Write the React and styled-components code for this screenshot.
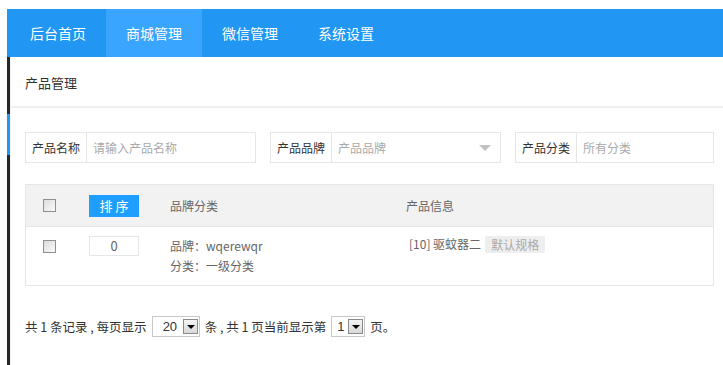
import styled, { createGlobalStyle } from 'styled-components'

const GlobalStyle = createGlobalStyle`
  html, body { margin: 0; padding: 0; background: #fff; }
  body {
    font-family: "Noto Sans CJK SC", "Liberation Sans", sans-serif;
    font-size: 13px;
    color: #333;
    overflow: hidden;
  }
`;

const tabs = ['后台首页', '商城管理', '微信管理', '系统设置'];

export default function App() {
  return (
    <Page>
      <GlobalStyle />
      <Nav>
        {tabs.map((t, i) => (
          <Tab key={t} $active={i === 1} $first={i === 0}>{t}</Tab>
        ))}
      </Nav>
      <Body>
        <SideBar>
          <SideDark $h={57} />
          <SideBlue />
          <SideDark $h={210} />
        </SideBar>
        <Content>
          <Title>产品管理</Title>
          <Main>
            <SearchRow>
              <Field $w={231}>
                <Label>产品名称</Label>
                <Input placeholder="请输入产品名称" />
              </Field>
              <Field $w={231}>
                <Label>产品品牌</Label>
                <SelectBox>
                  <span>产品品牌</span>
                  <Caret />
                </SelectBox>
              </Field>
              <Field $grow>
                <Label>产品分类</Label>
                <SelectBox>
                  <span>所有分类</span>
                </SelectBox>
              </Field>
            </SearchRow>

            <Table>
              <HeadRow>
                <CheckCell><Check /></CheckCell>
                <SortCell><SortBtn>排 序</SortBtn></SortCell>
                <BrandCell>品牌分类</BrandCell>
                <InfoCell>产品信息</InfoCell>
              </HeadRow>
              <DataRow>
                <CheckCell><Check /></CheckCell>
                <SortCell><SortInput>0</SortInput></SortCell>
                <BrandCell>
                  <Line>品牌：wqerewqr</Line>
                  <Line>分类：一级分类</Line>
                </BrandCell>
                <InfoCell $data>
                  <Line>[10] 驱蚊器二 <Tag>默认规格</Tag></Line>
                </InfoCell>
              </DataRow>
            </Table>

            <Pager>
              共 1 条记录 , 每页显示
              <PageSelect $w={48}><span>20</span><SelBtn /></PageSelect>
              条 , 共 1 页当前显示第
              <PageSelect $w={34}><span>1</span><SelBtn /></PageSelect>
              页。
            </Pager>
          </Main>
        </Content>
      </Body>
    </Page>
  );
}

const Page = styled.div`
  padding: 9px 0 0 7px;
  height: 356px;
`;

const Nav = styled.div`
  display: flex;
  height: 48px;
  background: #2196f3;
`;

const Tab = styled.div`
  display: flex;
  align-items: center;
  padding: 0 20px 0 ${p => (p.$first ? '23px' : '20px')};
  color: #fff;
  font-size: 14px;
  background: ${p => (p.$active ? '#39a5ff' : 'transparent')};
`;

const Body = styled.div`
  display: flex;
  height: 308px;
`;

const SideBar = styled.div`
  width: 3px;
  display: flex;
  flex-direction: column;
  flex-shrink: 0;
`;

const SideDark = styled.div`
  height: ${p => p.$h}px;
  background: #24272b;
`;

const SideBlue = styled.div`
  height: 41px;
  background: #2196f3;
`;

const Content = styled.div`
  flex: 1;
  border-left: 1px solid #f2f2f2;
  min-width: 0;
`;

const Title = styled.div`
  height: 49px;
  line-height: 51px;
  padding-left: 14px;
  font-size: 13px;
  color: #333;
  border-bottom: 2px solid #f0f0f0;
`;

const Main = styled.div`
  padding: 24px 9px 0 14px;
`;

const SearchRow = styled.div`
  display: flex;
  gap: 14px;
`;

const Field = styled.div`
  display: flex;
  height: 29px;
  border: 1px solid #e6e6e6;
  width: ${p => (p.$grow ? 'auto' : `${p.$w - 2}px`)};
  flex: ${p => (p.$grow ? 1 : 'none')};
`;

const Label = styled.div`
  width: 60px;
  flex-shrink: 0;
  display: flex;
  align-items: center;
  justify-content: center;
  border-right: 1px solid #e6e6e6;
  color: #333;
  font-size: 12px;
`;

const Input = styled.input`
  flex: 1;
  min-width: 0;
  border: none;
  outline: none;
  padding: 0 6px;
  font: inherit;
  font-size: 12px;
  &::placeholder { color: #aaa; }
`;

const SelectBox = styled.div`
  flex: 1;
  display: flex;
  align-items: center;
  justify-content: space-between;
  padding: 0 9px 0 6px;
  color: #aaa;
  font-size: 12px;
`;

const Caret = styled.span`
  width: 0;
  height: 0;
  border-left: 6px solid transparent;
  border-right: 6px solid transparent;
  border-top: 6px solid #c2c2c2;
`;

const Table = styled.div`
  margin-top: 21px;
  border: 1px solid #e6e6e6;
`;

const HeadRow = styled.div`
  display: flex;
  align-items: center;
  height: 41px;
  background: #f2f2f2;
  border-bottom: 1px solid #e6e6e6;
  color: #666;
`;

const DataRow = styled.div`
  display: flex;
  align-items: flex-start;
  height: 58px;
  color: #666;
`;

const CheckCell = styled.div`
  width: 63px;
  display: flex;
  padding-left: 17px;
  box-sizing: border-box;
  ${DataRow} & { padding-top: 13px; }
`;

const Check = styled.span`
  width: 11px;
  height: 11px;
  border: 1px solid #8f8f8f;
  background: linear-gradient(135deg, #dcdcdc, #fafafa);
  display: block;
`;

const SortCell = styled.div`
  width: 81px;
  ${DataRow} & { padding-top: 9px; }
`;

const SortBtn = styled.div`
  width: 50px;
  height: 22px;
  line-height: 22px;
  text-align: center;
  background: #1e9fff;
  color: #fff;
  font-size: 13px;
`;

const SortInput = styled.div`
  width: 48px;
  height: 18px;
  line-height: 18px;
  text-align: center;
  border: 1px solid #e6e6e6;
  color: #666;
`;

const BrandCell = styled.div`
  width: 236px;
  font-size: 12px;
  ${DataRow} & { padding-top: 9px; }
`;

const InfoCell = styled.div`
  flex: 1;
  font-size: 12px;
  padding-left: ${p => (p.$data ? '3px' : '0')};
  ${DataRow} & { padding-top: 7px; }
`;

const Line = styled.div`
  line-height: 20px;
  display: flex;
  align-items: center;
`;

const Tag = styled.span`
  margin-left: 4px;
  padding: 0 6px;
  line-height: 17px;
  background: #eeeeee;
  border-radius: 2px;
  color: #aaa;
`;

const Pager = styled.div`
  margin-top: 30px;
  display: flex;
  align-items: center;
  gap: 5px;
  color: #333;
  font-size: 12.5px;
`;

const PageSelect = styled.span`
  display: inline-flex;
  align-items: center;
  justify-content: space-between;
  width: ${p => p.$w}px;
  height: 21px;
  box-sizing: border-box;
  border: 1px solid #c8c8c8;
  padding: 0 1px 0 ${p => (p.$w > 40 ? 10 : 5)}px;
  color: #333;
  font-family: "Liberation Sans", sans-serif;
  font-size: 13px;
`;

const SelBtn = styled.span`
  width: 15px;
  height: 15px;
  box-sizing: border-box;
  border: 1px solid #8a8a8a;
  background: linear-gradient(#f4f4f4, #d8d8d8);
  position: relative;
  &::after {
    content: '';
    position: absolute;
    left: 3px;
    top: 5px;
    border-left: 4px solid transparent;
    border-right: 4px solid transparent;
    border-top: 4px solid #000;
  }
`;
